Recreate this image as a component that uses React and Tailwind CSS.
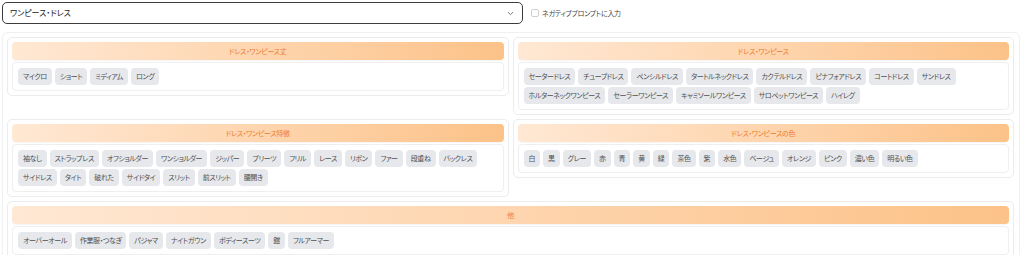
import React from 'react';

const groups = [
    { title: 'ドレス・ワンピース丈', items: ['マイクロ', 'ショート', 'ミディアム', 'ロング'] },
    {
        title: 'ドレス・ワンピース',
        items: ['セータードレス', 'チューブドレス', 'ペンシルドレス', 'タートルネックドレス', 'カクテルドレス', 'ピナフォアドレス', 'コートドレス', 'サンドレス', 'ホルターネックワンピース', 'セーラーワンピース', 'キャミソールワンピース', 'サロペットワンピース', 'ハイレグ'],
    },
    {
        title: 'ドレス・ワンピース特徴',
        items: ['袖なし', 'ストラップレス', 'オフショルダー', 'ワンショルダー', 'ジッパー', 'プリーツ', 'フリル', 'レース', 'リボン', 'ファー', '段重ね', 'バックレス', 'サイドレス', 'タイト', '破れた', 'サイドタイ', 'スリット', '前スリット', '腰開き'],
    },
    {
        title: 'ドレス・ワンピースの色',
        items: ['白', '黒', 'グレー', '赤', '青', '黄', '緑', '茶色', '紫', '水色', 'ベージュ', 'オレンジ', 'ピンク', '濃い色', '明るい色'],
    },
    { title: '他', items: ['オーバーオール', '作業服・つなぎ', 'パジャマ', 'ナイトガウン', 'ボディースーツ', '鎧', 'フルアーマー'], wide: true },
];

const Card = ({ group }) => (
    <div className={`bg-white border border-[#ececec] rounded-[5px] p-[4px] ${group.wide ? 'col-span-2' : ''}`}>
        <div className="h-[18px] rounded-[4px] bg-linear-to-r from-[#ffe8d4] to-[#fcc288] text-center text-[7px] tracking-[-0.3px] leading-[18px] text-[#ec7d33] shadow-[0_1px_1px_rgba(0,0,0,0.04)]">
            {group.title}
        </div>
        <div className="mt-[2px] border border-[#efefef] rounded-[4px] p-[5px] flex flex-wrap gap-x-[3px] gap-y-[2px]">
            {group.items.map((item) => (
                <span key={item} className="h-[17px] px-[5px] rounded-[4px] bg-[#e6e8ec] text-[#505050] text-[7px] tracking-[-0.4px] flex items-center whitespace-nowrap">
                    {item}
                </span>
            ))}
        </div>
    </div>
);

export default function App() {
    return (
        <div className="w-[1024px] h-[255px] overflow-hidden bg-white font-['Noto_Sans_CJK_JP',sans-serif] [font-feature-settings:'palt']">
            <div className="flex items-center pl-[2px] pt-[2px]">
                <div className="w-[521px] h-[22px] border-[1.5px] border-[#3c3c3c] rounded-[5px] flex items-center justify-between pl-[7px] pr-[8px]">
                    <span className="text-[8px] text-[#222]">ワンピース・ドレス</span>
                    <svg width="7" height="5" viewBox="0 0 7 5" fill="none">
                        <path d="M1 1.2 L3.5 3.6 L6 1.2" stroke="#777" strokeWidth="1" />
                    </svg>
                </div>
                <label className="ml-[8px] flex items-center gap-[3px]">
                    <span className="w-[8px] h-[8px] border border-[#cfcfcf] rounded-[2px] bg-white" />
                    <span className="text-[7px] tracking-[-0.3px] text-[#444]">ネガティブプロンプトに入力</span>
                </label>
            </div>
            <div className="mt-[8px] ml-[2px] w-[1018px] border border-[#f0f0f0] rounded-[6px] p-[4px] pr-[5px]">
                <div className="grid grid-cols-2 gap-[4px] items-start">
                    {groups.map((g) => (
                        <Card key={g.title} group={g} />
                    ))}
                </div>
            </div>
        </div>
    );
}
